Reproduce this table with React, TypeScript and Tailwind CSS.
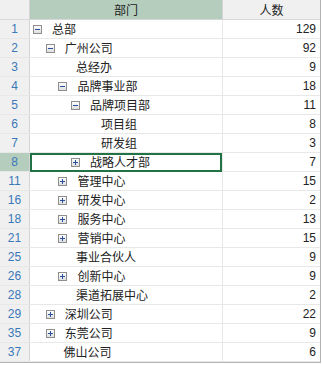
import React from 'react';

type Row = { no: number; name: string; level: number; count: number; exp?: 'open' | 'closed' };

const ROWS: Row[] = [
  { no: 1, name: '总部', level: 0, count: 129, exp: 'open' },
  { no: 2, name: '广州公司', level: 1, count: 92, exp: 'open' },
  { no: 3, name: '总经办', level: 2, count: 9 },
  { no: 4, name: '品牌事业部', level: 2, count: 18, exp: 'open' },
  { no: 5, name: '品牌项目部', level: 3, count: 11, exp: 'open' },
  { no: 6, name: '项目组', level: 4, count: 8 },
  { no: 7, name: '研发组', level: 4, count: 3 },
  { no: 8, name: '战略人才部', level: 3, count: 7, exp: 'closed' },
  { no: 11, name: '管理中心', level: 2, count: 15, exp: 'closed' },
  { no: 16, name: '研发中心', level: 2, count: 2, exp: 'closed' },
  { no: 18, name: '服务中心', level: 2, count: 13, exp: 'closed' },
  { no: 21, name: '营销中心', level: 2, count: 15, exp: 'closed' },
  { no: 25, name: '事业合伙人', level: 2, count: 9 },
  { no: 26, name: '创新中心', level: 2, count: 9, exp: 'closed' },
  { no: 28, name: '渠道拓展中心', level: 2, count: 2 },
  { no: 29, name: '深圳公司', level: 1, count: 22, exp: 'closed' },
  { no: 35, name: '东莞公司', level: 1, count: 9, exp: 'closed' },
  { no: 37, name: '佛山公司', level: 1, count: 6 },
];

const SELECTED = 8;

function Expander({ open }: { open: boolean }) {
  return (
    <svg width="9" height="9" viewBox="0 0 9 9" className="shrink-0">
      <defs>
        <linearGradient id="eg" x1="0" y1="0" x2="0" y2="1">
          <stop offset="0" stopColor="#ffffff" />
          <stop offset="1" stopColor="#dcdcdc" />
        </linearGradient>
      </defs>
      <rect x="0.5" y="0.5" width="8" height="8" fill="url(#eg)" stroke="#8e8e8e" />
      <rect x="2" y="4" width="5" height="1" fill="#2a4f9c" />
      {!open && <rect x="4" y="2" width="1" height="5" fill="#2a4f9c" />}
    </svg>
  );
}

export default function App() {
  return (
    <div
      className="w-[321px] h-[363px] bg-white border-r border-b border-[#b4b4b4] text-[12px] text-[#222] overflow-hidden"
      style={{ fontFamily: '"Noto Sans CJK SC", "Liberation Sans", sans-serif' }}
    >
      {/* header */}
      <div className="flex h-[20px] border-b border-[#d8d8d8]">
        <div className="w-[30px] shrink-0 bg-[#f0f0f0] border-r border-[#d4d4d4]" />
        <div className="w-[193px] shrink-0 bg-[#b5cdbd] border-r border-[#d4d4d4] flex items-center justify-center leading-none">
          部门
        </div>
        <div className="flex-1 bg-[#f0f0f0] flex items-center justify-center leading-none">人数</div>
      </div>

      {ROWS.map((r) => {
        const sel = r.no === SELECTED;
        return (
          <div key={r.no} className="flex h-[19px] border-b border-[#e8e8e8]">
            <div
              className={`w-[30px] shrink-0 border-r border-[#d4d4d4] flex items-center justify-center text-[#3a78b8] leading-none ${
                sel ? 'bg-[#b5cdbd]' : 'bg-[#f0f0f0]'
              }`}
              style={{ fontFamily: '"Liberation Sans", sans-serif' }}
            >
              {r.no}
            </div>
            <div className="relative w-[193px] shrink-0 border-r border-[#e8e8e8] flex items-center leading-none">
              {sel && <div className="absolute left-0 top-0 w-[192px] h-[19px] border-2 border-[#217346]" />}
              <div
                className="flex items-center"
                style={{ paddingLeft: r.exp ? 3 + r.level * 12.7 : 21 + r.level * 12.5 }}
              >
                {r.exp && (
                  <span className="mr-[10px] flex">
                    <Expander open={r.exp === 'open'} />
                  </span>
                )}
                <span>{r.name}</span>
              </div>
            </div>
            <div
              className="flex-1 flex items-center justify-end pr-[4px] leading-none"
              style={{ fontFamily: '"Liberation Sans", sans-serif' }}
            >
              {r.count}
            </div>
          </div>
        );
      })}
    </div>
  );
}
